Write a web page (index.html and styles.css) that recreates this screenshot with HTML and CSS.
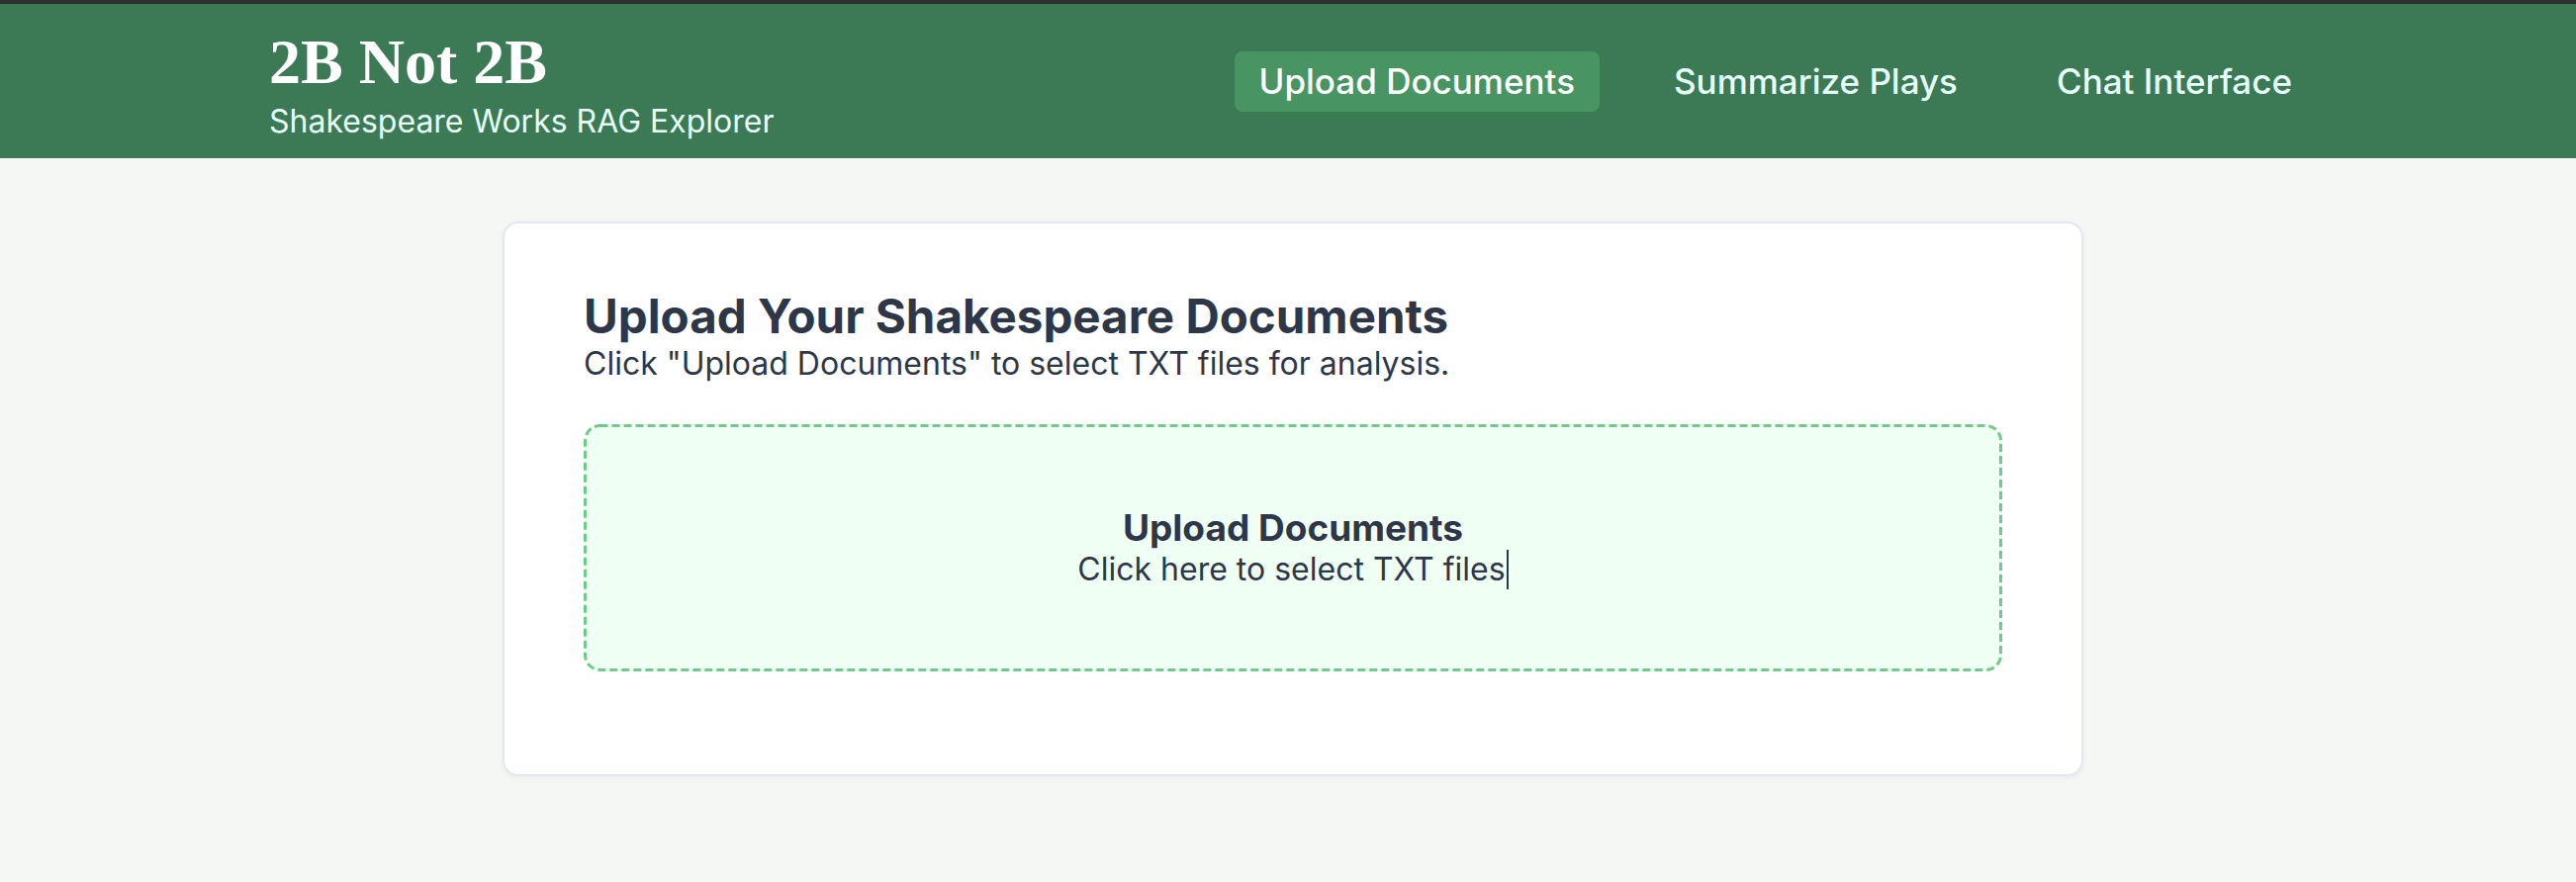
FILE: index.html
```html
<!DOCTYPE html>
<html lang="en">
<head>
<meta charset="utf-8">
<title>2B Not 2B</title>
<link rel="stylesheet" href="styles.css">
</head>
<body>
<header class="site-header">
  <div class="header-inner">
    <div class="brand">
      <h1 class="brand-title">2B Not 2B</h1>
      <p class="brand-sub">Shakespeare Works RAG Explorer</p>
    </div>
    <nav class="nav">
      <a class="nav-link active" href="#">Upload Documents</a>
      <a class="nav-link" href="#">Summarize Plays</a>
      <a class="nav-link" href="#">Chat Interface</a>
    </nav>
  </div>
</header>
<main class="main">
  <section class="card">
    <h2 class="card-title">Upload Your Shakespeare Documents</h2>
    <p class="card-desc">Click "Upload Documents" to select TXT files for analysis.</p>
    <div class="dropzone">
      <svg class="dz-border" width="1434" height="250" aria-hidden="true">
        <rect x="1.5" y="1.5" width="1431" height="247" rx="15" ry="15" fill="none" stroke="#72c98c" stroke-width="3" stroke-dasharray="8 4"/>
      </svg>
      <div class="dz-title">Upload Documents</div>
      <div class="dz-text">Click here to select TXT files<span class="caret"></span></div>
    </div>
  </section>
</main>
</body>
</html>
```
FILE: styles.css
```css
* { box-sizing: border-box; }
html, body { margin: 0; padding: 0; }
body {
  background: #f4f7f4;
  font-family: Inter, "Noto Sans", sans-serif;
  color: #2d3748;
  min-height: 892px;
}
.site-header {
  background: #3c7a55;
  border-top: 4px solid #2e3030;
  height: 160px;
}
.header-inner {
  width: 2070px;
  margin: 0 auto;
  position: relative;
  left: 5px;
  height: 100%;
  display: flex;
  align-items: flex-start;
  justify-content: space-between;
}
.brand { display: flex; flex-direction: column; padding-top: 27px; }
.brand-title {
  margin: 0;
  font-family: "Liberation Serif", "DejaVu Serif", serif;
  font-weight: 700;
  font-size: 64px;
  line-height: 64px;
  color: #ffffff;
}
.brand-sub {
  margin: 9px 0 0;
  font-size: 32px;
  line-height: 38px;
  color: #e6fffa;
}
.nav { display: flex; gap: 50px; align-items: center; align-self: center; }
.nav-link {
  color: #e6fffa;
  text-decoration: none;
  font-size: 35px;
  font-weight: 500;
  line-height: 41px;
  padding: 10px 25px;
  border-radius: 8px;
}
.nav-link.active { background: #489463; color: #ffffff; }
.main {
  display: flex;
  justify-content: center;
  padding-top: 64px;
  padding-left: 10px;
}
.card {
  width: 1598px;
  background: #ffffff;
  border: 2px solid #e2e8f0;
  border-radius: 16px;
  box-shadow: 0 2px 6px rgba(0,0,0,0.05);
  padding: 66px 80px 104px;
}
.card-title {
  margin: 0;
  font-size: 47.5px;
  font-weight: 700;
  line-height: 56px;
  color: #2d3748;
}
.card-desc {
  margin: 0;
  font-size: 32px;
  line-height: 40px;
  color: #2d3748;
}
.dropzone {
  position: relative;
  margin-top: 41px;
  height: 250px;
  border-radius: 16px;
  background: #f0fff4;
  display: flex;
  flex-direction: column;
  align-items: center;
  justify-content: center;
  text-align: center;
}
.dz-border {
  position: absolute;
  left: 0;
  top: 0;
  width: 100%;
  height: 100%;
  pointer-events: none;
}
.dz-title {
  font-size: 37px;
  font-weight: 700;
  line-height: 44px;
}
.dz-text {
  font-size: 32px;
  line-height: 40px;
  display: flex;
  align-items: center;
}
.caret {
  display: inline-block;
  width: 2px;
  height: 40px;
  background: #2d3748;
  margin-left: 1px;
}
```
